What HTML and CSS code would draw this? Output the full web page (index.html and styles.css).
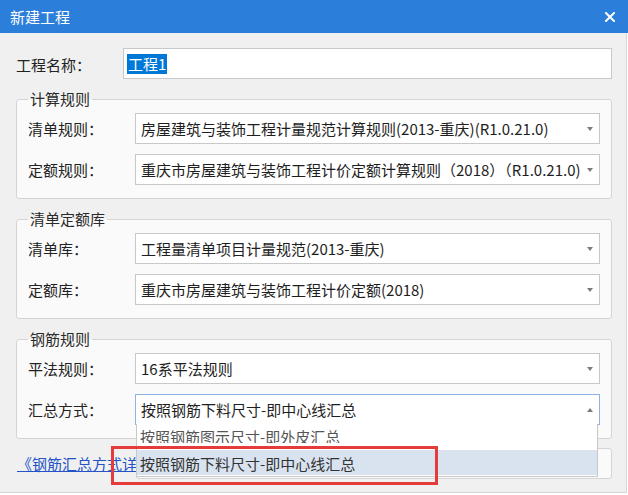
FILE: index.html
```html
<!DOCTYPE html>
<html lang="zh-CN">
<head>
<meta charset="utf-8">
<title>新建工程</title>
<link rel="stylesheet" href="styles.css">
</head>
<body>
<div class="window">
  <div class="titlebar">
    <span class="title">新建工程</span>
    <svg class="close" width="10" height="10" viewBox="0 0 10 10"><path d="M1 1L9 9M9 1L1 9" stroke="#fff" stroke-width="2" stroke-linecap="square"/></svg>
  </div>
  <div class="body">
    <div class="row name-row">
      <span class="lbl">工程名称：</span>
      <div class="input"><span class="sel">工程1</span></div>
    </div>

    <fieldset class="group">
      <legend>计算规则</legend>
      <div class="row">
        <span class="lbl">清单规则：</span>
        <div class="combo"><span class="val">房屋建筑与装饰工程计量规范计算规则(2013-重庆)(R1.0.21.0)</span><span class="arrow"></span></div>
      </div>
      <div class="row">
        <span class="lbl">定额规则：</span>
        <div class="combo"><span class="val">重庆市房屋建筑与装饰工程计价定额计算规则（2018）（R1.0.21.0)</span><span class="arrow"></span></div>
      </div>
    </fieldset>

    <fieldset class="group">
      <legend>清单定额库</legend>
      <div class="row">
        <span class="lbl">清单库：</span>
        <div class="combo"><span class="val">工程量清单项目计量规范(2013-重庆)</span><span class="arrow"></span></div>
      </div>
      <div class="row">
        <span class="lbl">定额库：</span>
        <div class="combo"><span class="val">重庆市房屋建筑与装饰工程计价定额(2018)</span><span class="arrow"></span></div>
      </div>
    </fieldset>

    <fieldset class="group">
      <legend>钢筋规则</legend>
      <div class="row">
        <span class="lbl">平法规则：</span>
        <div class="combo"><span class="val">16系平法规则</span><span class="arrow"></span></div>
      </div>
      <div class="row">
        <span class="lbl">汇总方式：</span>
        <div class="combo open"><span class="val">按照钢筋下料尺寸-即中心线汇总</span><span class="arrow up"></span>
          <div class="popup">
            <div class="item clipped">按照钢筋图示尺寸-即外皮汇总</div>
            <div class="item active">按照钢筋下料尺寸-即中心线汇总</div>
          </div>
        </div>
      </div>
    </fieldset>

    <div class="link-row">
      <a class="link">《钢筋汇总方式详细说明》</a>
      <div class="note-box"></div>
    </div>
  </div>
  <div class="mark"></div>
</div>
</body>
</html>
```

FILE: styles.css
```css
html, body {
  margin: 0;
  padding: 0;
  background: #ffffff;
}
body {
  font-family: "Noto Sans CJK SC", "Microsoft YaHei", sans-serif;
  font-size: 15px;
  color: #1f1f1f;
}
.window {
  position: relative;
  width: 628px;
  height: 495px;
}
.titlebar {
  height: 33px;
  background: #2c7edb;
  display: flex;
  align-items: center;
  justify-content: space-between;
  padding: 0 13px 0 10px;
  box-sizing: border-box;
}
.title {
  color: #ffffff;
  font-size: 15px;
  line-height: 20px;
}
.close {
  display: block;
}
.body {
  width: 627px;
  height: 460px;
  box-sizing: border-box;
  background: #f0f0f0;
  border-right: 1px solid #d6d6d6;
  border-bottom: 1px solid #d6d6d6;
  padding: 15px 14px 0 16px;
}
.row {
  display: flex;
  align-items: center;
  height: 31px;
}
.row + .row {
  margin-top: 10px;
}
.lbl {
  width: 107px;
  flex: none;
  line-height: 20px;
  color: #222222;
}
.name-row .lbl {
  padding-top: 2px;
}
.input {
  flex: 1;
  height: 31px;
  box-sizing: border-box;
  background: #ffffff;
  border: 1px solid #c8c8c8;
  display: flex;
  align-items: center;
  padding-left: 3px;
}
.sel {
  background: #0078d7;
  color: #ffffff;
  line-height: 20px;
  padding: 0 1px;
}
.group {
  margin: 10px 0 0 0;
  border: 1px solid #d4d4d4;
  border-radius: 3px;
  background: #fafafa;
  padding: 4px 11px 13px 11px;
  min-width: 0;
}
.group + .group {
  margin-top: 10px;
}
.group legend {
  padding: 0 2px;
  line-height: 20px;
  font-size: 15px;
  color: #2a2a2a;
}
.combo {
  position: relative;
  flex: 1;
  min-width: 0;
  height: 31px;
  box-sizing: border-box;
  background: #ffffff;
  border: 1px solid #c8c8c8;
  display: flex;
  align-items: center;
  padding: 0 6px 0 5px;
}
.combo.open {
  border-color: #8eb3e0;
}
.val {
  flex: 1;
  min-width: 0;
  white-space: nowrap;
  overflow: hidden;
  line-height: 20px;
  color: #1e1e1e;
}
.arrow {
  flex: none;
  width: 0;
  height: 0;
  border-left: 3px solid transparent;
  border-right: 3px solid transparent;
  border-top: 4px solid #7c7c7c;
  margin-left: 6px;
}
.arrow.up {
  border-top: 0;
  border-bottom: 4px solid #7c7c7c;
}
.popup {
  position: absolute;
  z-index: 5;
  top: 100%;
  left: 0;
  right: 1px;
  background: #ffffff;
  border: 1px solid #c8c8c8;
  border-top: 0;
  padding: 0 0 1px 0;
}
.item {
  white-space: nowrap;
  padding-left: 3px;
  color: #333333;
}
.item.clipped {
  height: 19px;
  line-height: 26px;
  overflow: hidden;
  margin-bottom: 7px;
  color: #555555;
}
.item.active {
  height: 25px;
  line-height: 27px;
  background: #d9e3f0;
}
.link-row {
  display: flex;
  height: 31px;
  margin-top: 9px;
}
.link {
  width: 120px;
  flex: none;
  white-space: nowrap;
  overflow: hidden;
  color: #2453c8;
  text-decoration: underline;
  line-height: 31px;
  padding-left: 1px;
  box-sizing: border-box;
}
.note-box {
  flex: 1;
  border: 1px solid #d4d4d4;
  border-radius: 3px;
  background: #fafafa;
}
.mark {
  position: absolute;
  z-index: 10;
  left: 111px;
  top: 446px;
  width: 327px;
  height: 39px;
  box-sizing: border-box;
  border: 3px solid #e63b3b;
}
```
